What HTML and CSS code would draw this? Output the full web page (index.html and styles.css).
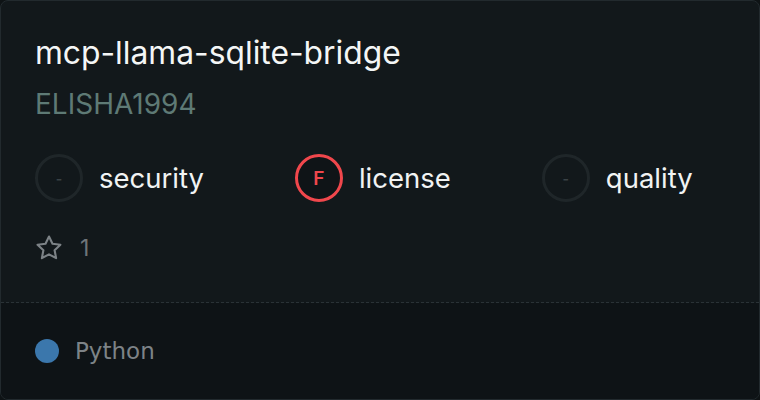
FILE: index.html
```html
<!DOCTYPE html>
<html>
<head>
<meta charset="utf-8">
<link rel="stylesheet" href="styles.css">
</head>
<body>
<div class="card">
  <div class="main">
    <div class="title">mcp-llama-sqlite-bridge</div>
    <div class="owner">ELISHA1994</div>
    <div class="scores">
      <div class="score">
        <div class="badge">-</div>
        <span class="label">security</span>
      </div>
      <div class="score">
        <div class="badge badge-fail">F</div>
        <span class="label">license</span>
      </div>
      <div class="score">
        <div class="badge">-</div>
        <span class="label">quality</span>
      </div>
    </div>
    <div class="stars">
      <svg class="star" viewBox="0 0 24 24" width="28" height="28" fill="none" stroke="currentColor" stroke-width="1.8" stroke-linejoin="round"><path d="M12 2.2l3 6.2 6.8.8-5 4.7 1.3 6.8L12 17.4l-6.1 3.3 1.3-6.8-5-4.7 6.8-.8z"/></svg>
      <span class="count">1</span>
    </div>
  </div>
  <div class="footer">
    <span class="dot"></span>
    <span class="lang">Python</span>
  </div>
</div>
</body>
</html>
```
FILE: styles.css
```css
* { box-sizing: border-box; }
html, body { margin: 0; padding: 0; background: #0e1315; }
.card {
  width: 760px;
  height: 400px;
  border: 1px solid #222a2e;
  border-radius: 8px;
  background: #12181b;
  overflow: hidden;
  display: flex;
  flex-direction: column;
  font-family: Inter, "Noto Sans", sans-serif;
}
.main {
  padding: 32px 34px 0 34px;
  height: 302px;
  border-bottom: 1px dashed #2a3236;
}
.title {
  color: #f4f6f6;
  font-size: 31.8px;
  line-height: 40px;
}
.owner {
  color: #5e7a75;
  font-size: 28px;
  line-height: 36px;
  margin-top: 13px;
}
.scores {
  display: flex;
  gap: 91px;
  margin-top: 32px;
}
.score {
  display: flex;
  align-items: center;
  gap: 16px;
}
.badge {
  width: 48px;
  height: 48px;
  border-radius: 50%;
  border: 3px solid #1f2629;
  display: flex;
  align-items: center;
  justify-content: center;
  color: #3a4246;
  font-size: 14px;
  font-weight: 600;
}
.badge-fail {
  border-color: #f0474c;
  color: #f0474c;
  background: #0f1417;
  font-size: 19px;
}
.label {
  color: #f1f3f3;
  font-size: 27.5px;
}
.stars {
  display: flex;
  align-items: center;
  gap: 17px;
  margin-top: 32px;
  color: #7c8286;
}
.count {
  font-size: 23px;
  color: #6f7579;
}
.footer {
  flex: 1;
  background: #0e1316;
  display: flex;
  align-items: center;
  padding-left: 34px;
  gap: 16px;
}
.dot {
  width: 24px;
  height: 24px;
  border-radius: 50%;
  background: #3b77ac;
}
.lang {
  font-family: "DejaVu Sans", sans-serif;
  font-size: 23px;
  color: #7d8387;
}
```
